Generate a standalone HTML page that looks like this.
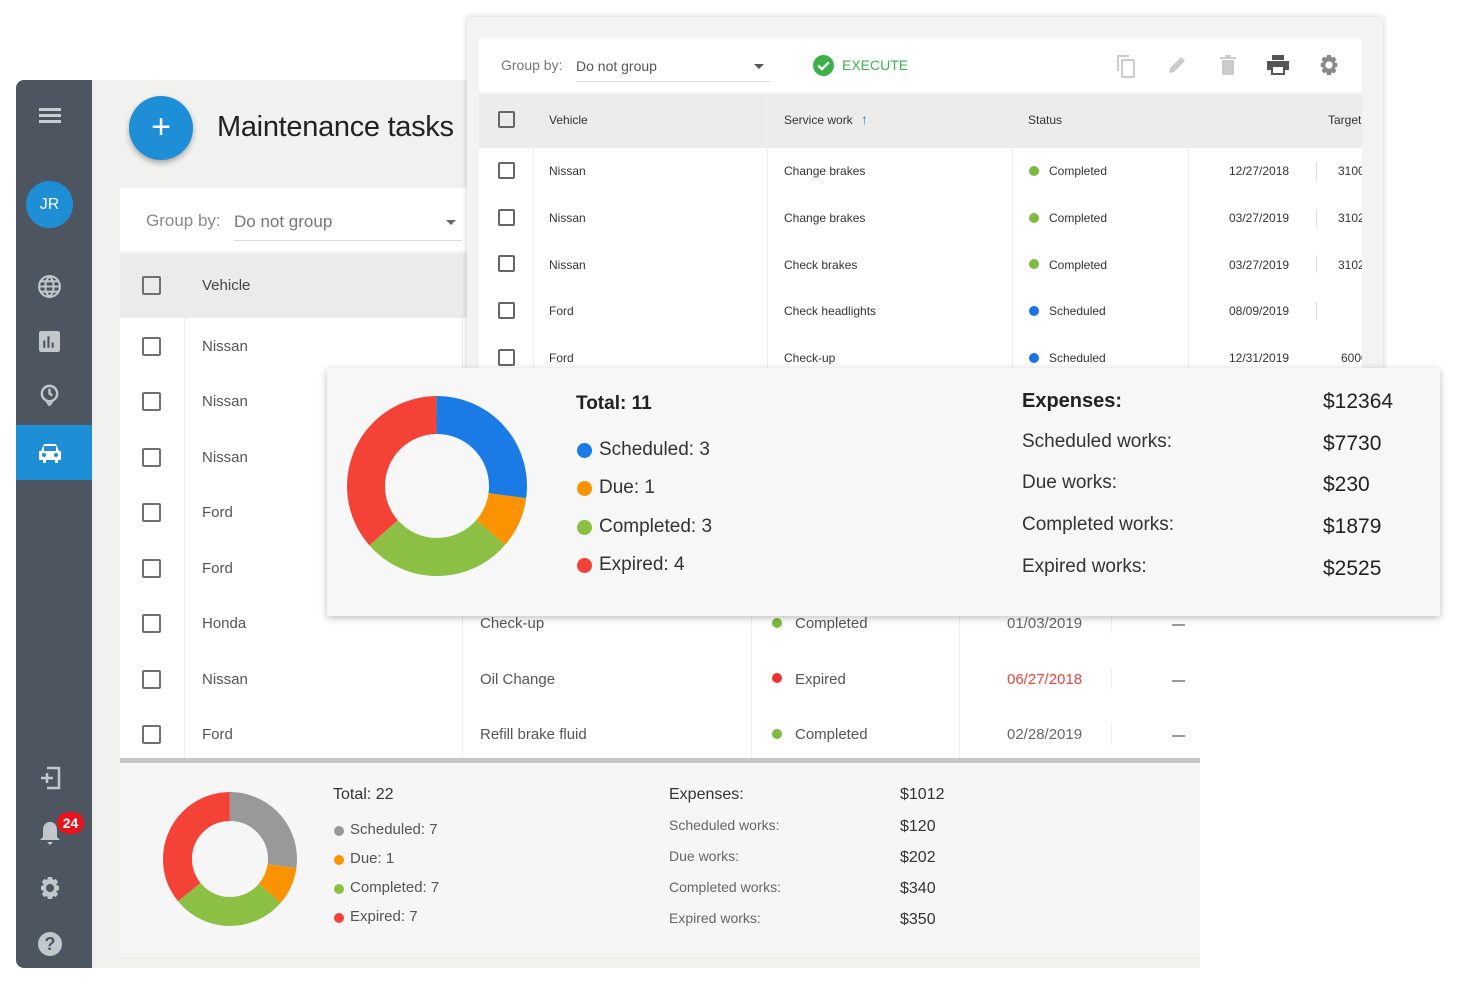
<!DOCTYPE html>
<html><head><meta charset="utf-8"><style>
*{margin:0;padding:0;box-sizing:border-box}
body{width:1460px;height:981px;background:#fff;position:relative;overflow:hidden;font-family:"Liberation Sans",sans-serif;color:#555}
.a{position:absolute}
.t{position:absolute;white-space:nowrap}
.cb{position:absolute;width:19px;height:19px;border:2px solid #707070;border-radius:2px}
.cb2{position:absolute;width:17px;height:17px;border:2px solid #666;border-radius:2px}
.dot{position:absolute;width:10px;height:10px;border-radius:50%}
.vl{position:absolute;width:1px;background:#eee}
</style></head><body>

<!-- BACK PANEL -->
<div class="a" style="left:16px;top:80px;width:1184px;height:888px;background:#f1f1f0;border-radius:8px 0 0 8px;overflow:hidden">
  <div class="a" style="left:0;top:0;width:76px;height:888px;background:#4d5660"></div>
  <div class="a" style="left:0;top:345px;width:76px;height:55px;background:#1e8fd6"></div>
</div>
<div class="a" style="left:39px;top:108px;width:22px;height:3px;background:#c8cdd2;box-shadow:0 6px 0 #c8cdd2,0 12px 0 #c8cdd2"></div>
<div class="a" style="left:26px;top:181px;width:47px;height:47px;border-radius:50%;background:#1e8fd6;color:#fff;font-size:16px;text-align:center;line-height:47px">JR</div>
<svg class="a" style="left:37px;top:274px" width="25" height="25" viewBox="0 0 24 24" fill="none" stroke="#c2c7cc" stroke-width="2"><circle cx="12" cy="12" r="10"/><path d="M2 12h20M12 2c3 3 4 7 4 10s-1 7-4 10c-3-3-4-7-4-10s1-7 4-10M4 7h16M4 17h16"/></svg>
<svg class="a" style="left:39px;top:331px" width="21" height="21" viewBox="0 0 20 20"><rect width="20" height="20" rx="2" fill="#c2c7cc"/><path d="M5 9v7M9 5v11M13 11v5" stroke="#4d5660" stroke-width="2"/></svg>
<svg class="a" style="left:38px;top:383px" width="23" height="23" viewBox="0 0 24 24" fill="none" stroke="#c2c7cc" stroke-width="2.5"><circle cx="12" cy="11" r="8"/><path d="M12 6v5l3 2M9 19l3 4 3-4"/></svg>
<svg class="a" style="left:37px;top:442px" width="26" height="22" viewBox="0 0 26 22"><path d="M4 9l3-7h12l3 7h2v9h-3v3h-3v-3H9v3H6v-3H2V9z" fill="#fff"/><rect x="7" y="4" width="12" height="5" fill="#1e8fd6"/><circle cx="7" cy="13" r="2" fill="#1e8fd6"/><circle cx="19" cy="13" r="2" fill="#1e8fd6"/></svg>
<svg class="a" style="left:39px;top:764px" width="24" height="28" viewBox="0 0 24 28" fill="none" stroke="#c2c7cc" stroke-width="2.5"><path d="M8 4h12v20H8M2 14h12M8 9v10"/></svg>
<svg class="a" style="left:38px;top:820px" width="24" height="26" viewBox="0 0 24 26"><path d="M12 2c-5 0-7 4-7 8v7l-3 3h20l-3-3v-7c0-4-2-8-7-8z M9 22h6l-3 3z" fill="#c2c7cc"/></svg>
<div class="a" style="left:57px;top:812px;width:27px;height:22px;border-radius:11px;background:#e8131b;color:#fff;font-size:14px;font-weight:bold;text-align:center;line-height:22px">24</div>
<svg class="a" style="left:38px;top:876px" width="24" height="24" viewBox="0 0 24 24"><path fill="#c2c7cc" d="M10 1h4l1 3 3-1 2 3-2 3 3 1v4l-3 1 2 3-2 3-3-1-1 3h-4l-1-3-3 1-2-3 2-3-3-1v-4l3-1-2-3 2-3 3 1z"/><circle cx="12" cy="12" r="4" fill="#4d5660"/></svg>
<div class="a" style="left:38px;top:932px;width:24px;height:24px;border-radius:50%;background:#c2c7cc;color:#4d5660;font-weight:bold;font-size:18px;text-align:center;line-height:24px">?</div>

<div class="a" style="left:129px;top:96px;width:64px;height:64px;border-radius:50%;background:#1e8fd6;box-shadow:0 3px 6px rgba(0,0,0,.3);color:#fff;font-size:34px;text-align:center;line-height:62px">+</div>
<div class="t" style="left:217px;top:111px;font-size:29px;color:#222;letter-spacing:-0.3px">Maintenance tasks</div>

<div class="a" style="left:120px;top:188px;width:1080px;height:64px;background:#fff"></div>
<div class="t" style="left:146px;top:211px;font-size:17px;color:#888">Group by:</div>
<div class="t" style="left:234px;top:212px;font-size:17px;color:#777">Do not group</div>
<div class="a" style="left:234px;top:240px;width:228px;height:1px;background:#ddd"></div>
<div class="a" style="left:446px;top:220px;border:5px solid transparent;border-top:5px solid #666"></div>
<div class="a" style="left:120px;top:254px;width:1080px;height:64px;background:#ebebea"></div>
<div class="cb" style="left:142px;top:276px"></div>
<div class="t" style="left:202px;top:277px;font-size:15px;color:#444">Vehicle</div>
<div class="a" style="left:120px;top:318px;width:1080px;height:442px;background:#fff"></div>
<div class="vl" style="left:184px;top:318px;height:442px"></div>
<div class="vl" style="left:462px;top:318px;height:442px"></div>
<div class="vl" style="left:751px;top:318px;height:442px"></div>
<div class="vl" style="left:959px;top:318px;height:442px"></div>

<div class="cb" style="left:142px;top:337px"></div><div class="t" style="left:202px;top:338px;font-size:15px">Nissan</div>
<div class="cb" style="left:142px;top:392px"></div><div class="t" style="left:202px;top:393px;font-size:15px">Nissan</div>
<div class="cb" style="left:142px;top:448px"></div><div class="t" style="left:202px;top:449px;font-size:15px">Nissan</div>
<div class="cb" style="left:142px;top:503px"></div><div class="t" style="left:202px;top:504px;font-size:15px">Ford</div>
<div class="cb" style="left:142px;top:559px"></div><div class="t" style="left:202px;top:560px;font-size:15px">Ford</div>
<div class="cb" style="left:142px;top:614px"></div><div class="t" style="left:202px;top:615px;font-size:15px">Honda</div>
<div class="cb" style="left:142px;top:670px"></div><div class="t" style="left:202px;top:671px;font-size:15px">Nissan</div>
<div class="cb" style="left:142px;top:725px"></div><div class="t" style="left:202px;top:726px;font-size:15px">Ford</div>

<div class="t" style="left:480px;top:615px;font-size:15px">Check-up</div>
<div class="t" style="left:480px;top:671px;font-size:15px">Oil Change</div>
<div class="t" style="left:480px;top:726px;font-size:15px">Refill brake fluid</div>
<div class="dot" style="left:772px;top:618px;background:#7dbb3c"></div><div class="t" style="left:795px;top:615px;font-size:15px">Completed</div>
<div class="dot" style="left:772px;top:673px;background:#f0342d"></div><div class="t" style="left:795px;top:671px;font-size:15px">Expired</div>
<div class="dot" style="left:772px;top:729px;background:#7dbb3c"></div><div class="t" style="left:795px;top:726px;font-size:15px">Completed</div>
<div class="t" style="left:1007px;top:615px;font-size:15px;color:#666">01/03/2019</div>
<div class="t" style="left:1007px;top:671px;font-size:15px;color:#f0443a">06/27/2018</div>
<div class="t" style="left:1007px;top:726px;font-size:15px;color:#666">02/28/2019</div>
<div class="vl" style="left:1111px;top:612px;height:22px"></div><div class="vl" style="left:1111px;top:668px;height:22px"></div><div class="vl" style="left:1111px;top:723px;height:22px"></div>
<div class="a" style="left:1172px;top:624px;width:13px;height:2px;background:#999"></div>
<div class="a" style="left:1172px;top:680px;width:13px;height:2px;background:#999"></div>
<div class="a" style="left:1172px;top:735px;width:13px;height:2px;background:#999"></div>

<div class="a" style="left:120px;top:758px;width:1080px;height:5px;background:#c6c6c6"></div>
<div class="a" style="left:120px;top:763px;width:1080px;height:190px;background:#f6f6f6"></div>
<svg class="a" style="left:163px;top:792px" width="134" height="134" viewBox="0 0 134 134"><g transform="rotate(-90 67 67)" fill="none" stroke-width="29"><circle cx="67" cy="67" r="52.5" pathLength="360" stroke="#999" stroke-dasharray="98 262"/><circle cx="67" cy="67" r="52.5" pathLength="360" stroke="#fb9300" stroke-dasharray="0 98 33 229"/><circle cx="67" cy="67" r="52.5" pathLength="360" stroke="#8bc045" stroke-dasharray="0 131 100 129"/><circle cx="67" cy="67" r="52.5" pathLength="360" stroke="#f44236" stroke-dasharray="0 231 129 0"/></g></svg>
<div class="t" style="left:333px;top:786px;font-size:16px;color:#333">Total: 22</div>
<div class="dot" style="left:334px;top:826px;background:#999"></div><div class="t" style="left:350px;top:821px;font-size:15px">Scheduled: 7</div>
<div class="dot" style="left:334px;top:855px;background:#fb9300"></div><div class="t" style="left:350px;top:850px;font-size:15px">Due: 1</div>
<div class="dot" style="left:334px;top:884px;background:#8bc045"></div><div class="t" style="left:350px;top:879px;font-size:15px">Completed: 7</div>
<div class="dot" style="left:334px;top:913px;background:#f44236"></div><div class="t" style="left:350px;top:908px;font-size:15px">Expired: 7</div>
<div class="t" style="left:669px;top:786px;font-size:16px;color:#333">Expenses:</div>
<div class="t" style="left:669px;top:817px;font-size:14px;color:#666">Scheduled works:</div>
<div class="t" style="left:669px;top:848px;font-size:14px;color:#666">Due works:</div>
<div class="t" style="left:669px;top:879px;font-size:14px;color:#666">Completed works:</div>
<div class="t" style="left:669px;top:910px;font-size:14px;color:#666">Expired works:</div>
<div class="t" style="left:900px;top:786px;font-size:16px;color:#333">$1012</div>
<div class="t" style="left:900px;top:818px;font-size:16px;color:#333">$120</div>
<div class="t" style="left:900px;top:849px;font-size:16px;color:#333">$202</div>
<div class="t" style="left:900px;top:880px;font-size:16px;color:#333">$340</div>
<div class="t" style="left:900px;top:911px;font-size:16px;color:#333">$350</div>

<!-- FRONT PANEL -->
<div class="a" style="left:467px;top:17px;width:916px;height:360px;background:#f3f3f3;box-shadow:0 0 6px rgba(0,0,0,.2)"></div>
<div class="a" style="left:479px;top:38px;width:883px;height:340px;overflow:hidden">
<div style="position:relative;left:-479px;top:-38px;width:1460px;height:420px">
<div class="a" style="left:479px;top:38px;width:883px;height:54px;background:#fff"></div>
<div class="t" style="left:501px;top:57px;font-size:14px;color:#777">Group by:</div>
<div class="t" style="left:576px;top:58px;font-size:14px;color:#555">Do not group</div>
<div class="a" style="left:576px;top:81px;width:195px;height:1px;background:#ddd"></div>
<div class="a" style="left:754px;top:64px;border:5px solid transparent;border-top:5px solid #555"></div>
<svg class="a" style="left:813px;top:55px" width="21" height="21" viewBox="0 0 20 20"><circle cx="10" cy="10" r="10" fill="#3cb14a"/><path d="M5 10l3.5 3.5L15 7" stroke="#fff" stroke-width="2.2" fill="none"/></svg>
<div class="t" style="left:842px;top:57px;font-size:14px;color:#3cb14a">EXECUTE</div>
<svg class="a" style="left:1115px;top:54px" width="22" height="24" viewBox="0 0 22 24" fill="none" stroke="#ccc" stroke-width="2"><path d="M3 17V2h11"/><rect x="7" y="6" width="12" height="17" rx="1"/></svg>
<svg class="a" style="left:1167px;top:55px" width="20" height="20" viewBox="0 0 20 20"><path d="M2 18l1-5L14 2l4 4L7 17z" fill="#ccc"/></svg>
<svg class="a" style="left:1220px;top:55px" width="16" height="20" viewBox="0 0 16 20"><path d="M0 2h16v2H0zM5 0h6v2H5zM2 5h12v15H2z" fill="#ccc"/></svg>
<svg class="a" style="left:1267px;top:55px" width="22" height="20" viewBox="0 0 22 20"><path d="M5 0h12v5H5zM0 6h22v9h-4v5H4v-5H0z" fill="#555"/><rect x="6" y="12" width="10" height="6" fill="#fff"/></svg>
<svg class="a" style="left:1318px;top:54px" width="22" height="22" viewBox="0 0 24 24"><path fill="#888" d="M10 1h4l1 3 3-1 2 3-2 3 3 1v4l-3 1 2 3-2 3-3-1-1 3h-4l-1-3-3 1-2-3 2-3-3-1v-4l3-1-2-3 2-3 3 1z"/><circle cx="12" cy="12" r="4" fill="#fff"/></svg>

<div class="a" style="left:479px;top:94px;width:883px;height:54px;background:#ececeb"></div>
<div class="cb2" style="left:498px;top:111px"></div>
<div class="t" style="left:549px;top:113px;font-size:12px;color:#333">Vehicle</div>
<div class="t" style="left:784px;top:113px;font-size:12px;color:#333">Service work</div>
<div class="t" style="left:861px;top:111px;font-size:14px;color:#1e8fd6">↑</div>
<div class="t" style="left:1028px;top:113px;font-size:12px;color:#333">Status</div>
<div class="t" style="left:1328px;top:113px;font-size:12px;color:#333">Target</div>
<div class="a" style="left:479px;top:148px;width:883px;height:225px;background:#fff"></div>
<div class="vl" style="left:533px;top:94px;height:280px"></div>
<div class="vl" style="left:767px;top:94px;height:280px"></div>
<div class="vl" style="left:1012px;top:94px;height:280px"></div>
<div class="vl" style="left:1188px;top:94px;height:280px"></div>

<div class="cb2" style="left:498px;top:162px"></div><div class="t" style="left:549px;top:164px;font-size:12px;color:#333">Nissan</div><div class="t" style="left:784px;top:164px;font-size:12px;color:#333">Change brakes</div><div class="dot" style="left:1029px;top:166px;background:#7dbb3c"></div><div class="t" style="left:1049px;top:164px;font-size:12px;color:#333">Completed</div><div class="t" style="left:1229px;top:164px;font-size:12px;color:#333">12/27/2018</div><div class="t" style="left:1338px;top:164px;font-size:12px;color:#333">3100</div>
<div class="cb2" style="left:498px;top:209px"></div><div class="t" style="left:549px;top:211px;font-size:12px;color:#333">Nissan</div><div class="t" style="left:784px;top:211px;font-size:12px;color:#333">Change brakes</div><div class="dot" style="left:1029px;top:213px;background:#7dbb3c"></div><div class="t" style="left:1049px;top:211px;font-size:12px;color:#333">Completed</div><div class="t" style="left:1229px;top:211px;font-size:12px;color:#333">03/27/2019</div><div class="t" style="left:1338px;top:211px;font-size:12px;color:#333">3102</div>
<div class="cb2" style="left:498px;top:255px"></div><div class="t" style="left:549px;top:258px;font-size:12px;color:#333">Nissan</div><div class="t" style="left:784px;top:258px;font-size:12px;color:#333">Check brakes</div><div class="dot" style="left:1029px;top:259px;background:#7dbb3c"></div><div class="t" style="left:1049px;top:258px;font-size:12px;color:#333">Completed</div><div class="t" style="left:1229px;top:258px;font-size:12px;color:#333">03/27/2019</div><div class="t" style="left:1338px;top:258px;font-size:12px;color:#333">3102</div>
<div class="cb2" style="left:498px;top:302px"></div><div class="t" style="left:549px;top:304px;font-size:12px;color:#333">Ford</div><div class="t" style="left:784px;top:304px;font-size:12px;color:#333">Check headlights</div><div class="dot" style="left:1029px;top:306px;background:#1a73e8"></div><div class="t" style="left:1049px;top:304px;font-size:12px;color:#333">Scheduled</div><div class="t" style="left:1229px;top:304px;font-size:12px;color:#333">08/09/2019</div>
<div class="cb2" style="left:498px;top:349px"></div><div class="t" style="left:549px;top:351px;font-size:12px;color:#333">Ford</div><div class="t" style="left:784px;top:351px;font-size:12px;color:#333">Check-up</div><div class="dot" style="left:1029px;top:353px;background:#1a73e8"></div><div class="t" style="left:1049px;top:351px;font-size:12px;color:#333">Scheduled</div><div class="t" style="left:1229px;top:351px;font-size:12px;color:#333">12/31/2019</div><div class="t" style="left:1341px;top:351px;font-size:12px;color:#333">6000</div>
<div class="vl" style="left:1316px;top:162px;height:18px;background:#ddd"></div><div class="vl" style="left:1316px;top:209px;height:18px;background:#ddd"></div><div class="vl" style="left:1316px;top:255px;height:18px;background:#ddd"></div><div class="vl" style="left:1316px;top:302px;height:18px;background:#ddd"></div>
</div></div>

<!-- OVERLAY -->
<div class="a" style="left:327px;top:368px;width:1113px;height:248px;background:#f7f7f7;box-shadow:0 2px 8px rgba(0,0,0,.25);border-radius:2px"></div>
<svg class="a" style="left:347px;top:396px" width="180" height="180" viewBox="0 0 180 180"><g transform="rotate(-90 90 90)" fill="none" stroke-width="38"><circle cx="90" cy="90" r="71" pathLength="360" stroke="#1a7ae6" stroke-dasharray="98 262"/><circle cx="90" cy="90" r="71" pathLength="360" stroke="#fb9300" stroke-dasharray="0 98 33 229"/><circle cx="90" cy="90" r="71" pathLength="360" stroke="#8bc045" stroke-dasharray="0 131 98 131"/><circle cx="90" cy="90" r="71" pathLength="360" stroke="#f44236" stroke-dasharray="0 229 131 0"/></g></svg>
<div class="t" style="left:576px;top:393px;font-size:19px;font-weight:bold;color:#222">Total: 11</div>
<div class="dot" style="left:577px;top:443px;width:15px;height:15px;background:#1a7ae6"></div><div class="t" style="left:599px;top:439px;font-size:19px;color:#333">Scheduled: 3</div>
<div class="dot" style="left:577px;top:481px;width:15px;height:15px;background:#fb9300"></div><div class="t" style="left:599px;top:477px;font-size:19px;color:#333">Due: 1</div>
<div class="dot" style="left:577px;top:520px;width:15px;height:15px;background:#8bc045"></div><div class="t" style="left:599px;top:516px;font-size:19px;color:#333">Completed: 3</div>
<div class="dot" style="left:577px;top:558px;width:15px;height:15px;background:#f44236"></div><div class="t" style="left:599px;top:554px;font-size:19px;color:#333">Expired: 4</div>
<div class="t" style="left:1022px;top:390px;font-size:20px;font-weight:bold;color:#222">Expenses:</div>
<div class="t" style="left:1022px;top:431px;font-size:19px;color:#333">Scheduled works:</div>
<div class="t" style="left:1022px;top:472px;font-size:19px;color:#333">Due works:</div>
<div class="t" style="left:1022px;top:514px;font-size:19px;color:#333">Completed works:</div>
<div class="t" style="left:1022px;top:556px;font-size:19px;color:#333">Expired works:</div>
<div class="t" style="left:1323px;top:390px;font-size:21px;color:#222">$12364</div>
<div class="t" style="left:1323px;top:432px;font-size:21px;color:#222">$7730</div>
<div class="t" style="left:1323px;top:473px;font-size:21px;color:#222">$230</div>
<div class="t" style="left:1323px;top:515px;font-size:21px;color:#222">$1879</div>
<div class="t" style="left:1323px;top:557px;font-size:21px;color:#222">$2525</div>
</body></html>
